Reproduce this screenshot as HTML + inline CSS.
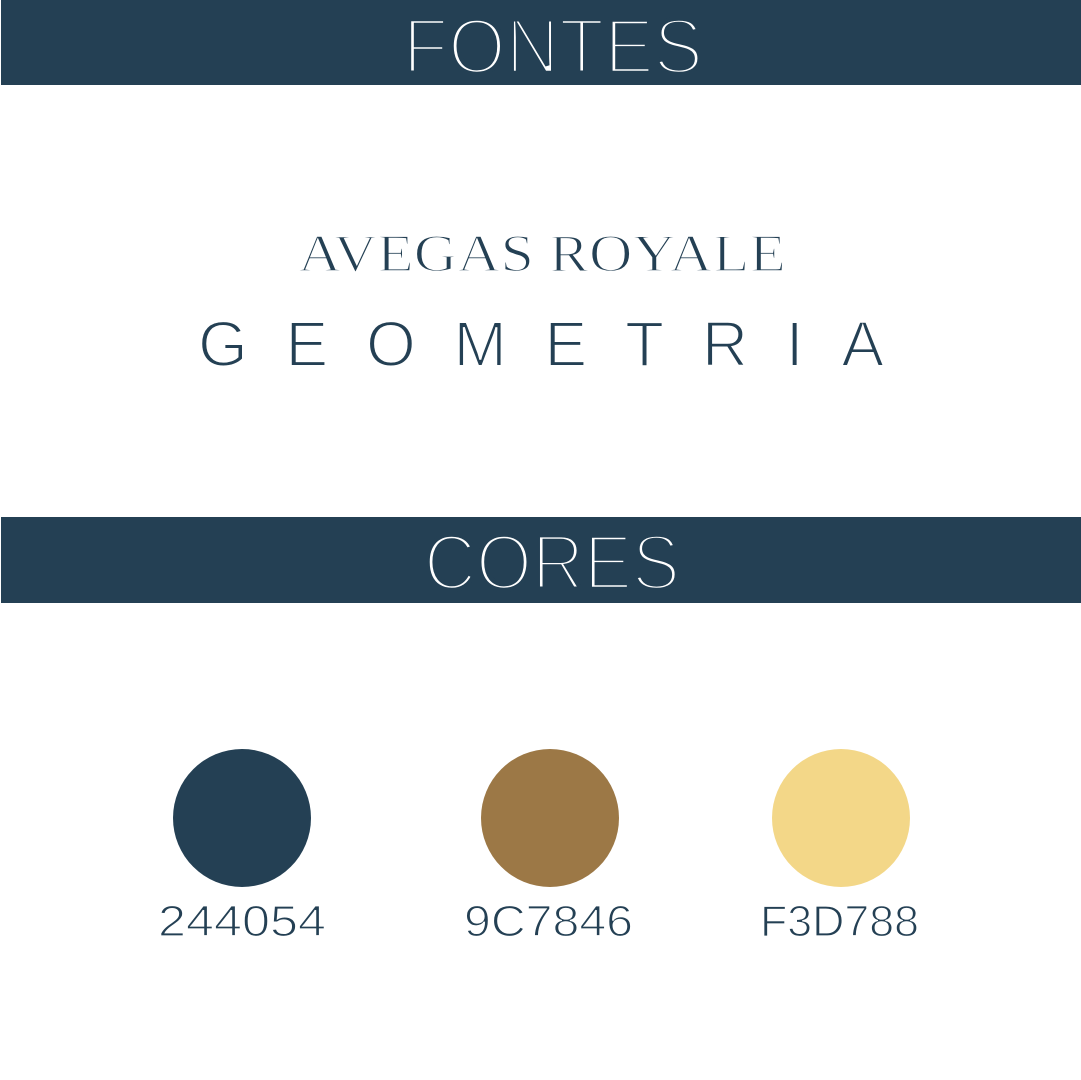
<!DOCTYPE html>
<html><head><style>html,body{margin:0;padding:0;background:#fff}svg{display:block}</style></head>
<body>
<svg width="1081" height="1080" viewBox="0 0 1081 1080" xmlns="http://www.w3.org/2000/svg">
<rect x="0" y="0" width="1081" height="1080" fill="#fff"/>
<rect x="1" y="0" width="1080" height="85" fill="#244054"/>
<rect x="1" y="517" width="1080" height="86" fill="#244054"/>
<g font-family="Liberation Sans, sans-serif" fill="#fff" stroke="#244054" stroke-width="4.5">
<text x="403" y="73" font-size="78" textLength="300" lengthAdjust="spacingAndGlyphs">FONTES</text>
<text x="424" y="589" font-size="78" textLength="256" lengthAdjust="spacingAndGlyphs">CORES</text>
</g>
<text x="298" y="271" font-family="Liberation Serif, serif" font-size="53" fill="#244054" stroke="#fff" stroke-width="1.5" textLength="488" lengthAdjust="spacingAndGlyphs">AVEGAS ROYALE</text>
<text x="198" y="366" font-family="Liberation Sans, sans-serif" font-size="64" fill="#244054" stroke="#fff" stroke-width="2" textLength="686" lengthAdjust="spacing">GEOMETRIA</text>
<circle cx="242" cy="818" r="69" fill="#244054"/>
<circle cx="550" cy="818" r="69" fill="#9c7846"/>
<circle cx="841" cy="818" r="69" fill="#f3d788"/>
<g font-family="Liberation Sans, sans-serif" font-size="44" fill="#244054" stroke="#fff" stroke-width="1.3">
<text x="158" y="936" textLength="168" lengthAdjust="spacingAndGlyphs">244054</text>
<text x="464" y="936" textLength="169" lengthAdjust="spacingAndGlyphs">9C7846</text>
<text x="760" y="936" textLength="159" lengthAdjust="spacingAndGlyphs">F3D788</text>
</g>
</svg>
</body></html>
